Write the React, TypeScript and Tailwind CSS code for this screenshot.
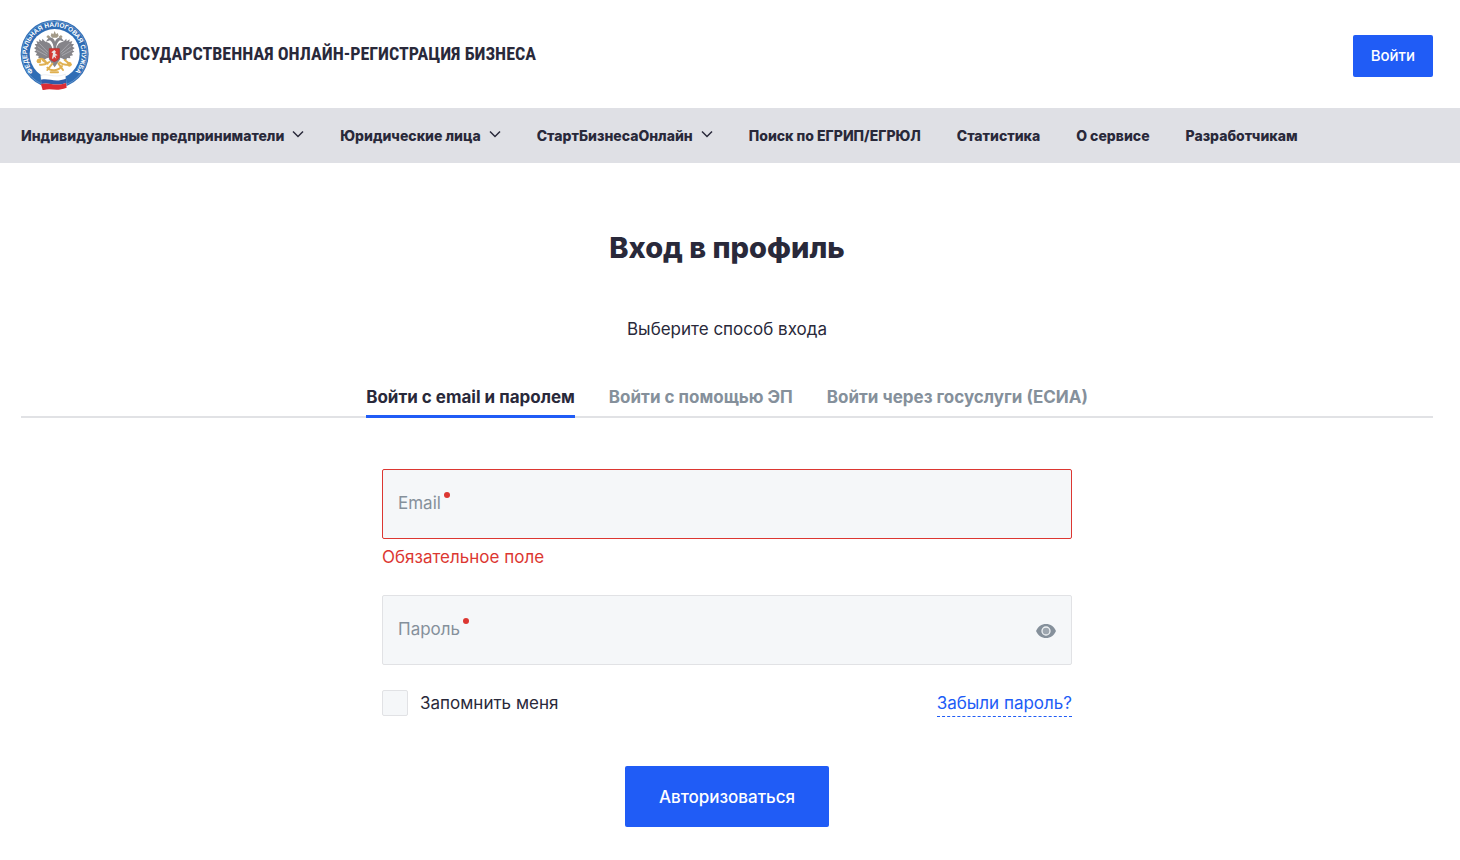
import { useState } from "react";

function Emblem() {
  return (
    <svg viewBox="30 24 207 216" className="h-[72px] w-[69px] shrink-0" role="img" aria-label="Федеральная налоговая служба">
      <defs>
        <path id="ring" d="M79 194 A82 82 0 1 1 187 194" />
      </defs>
      <circle cx="134" cy="132" r="102" fill="#2f6db5" />
      <circle cx="134" cy="132" r="98" fill="none" stroke="#8fb4dc" strokeWidth="1.500" />
      <circle cx="134" cy="132" r="75" fill="#ffffff" />
      <text fontSize="19.500" fontWeight="700" fill="#ffffff" fontFamily="Liberation Sans, sans-serif">
        <textPath href="#ring" startOffset="50%" textAnchor="middle">ФЕДЕРАЛЬНАЯ НАЛОГОВАЯ СЛУЖБА</textPath>
      </text>
      <g fill="#858489">
        <path d="M128 118c-3-15-11-22-22-23l-9-9-1 8-9-6 1 8-9-3 3 9-8 0 5 8-7 4 7 6-6 5 8 4-4 7 9 2-1 7 10-1 3 8 12-7 18-5z" />
        <path d="M138 118c3-15 11-22 22-23l9-9 1 8 9-6-1 8 9-3-3 9 8 0-5 8 7 4-7 6 6 5-8 4 4 7-9 2 1 7-10-1-3 8-12-7-18-5z" />
        <path d="M130 119c2-12-2-22-10-28l-13 4 10-13c12 0 18 8 18 16 0-8 8-16 18-16l10 13-13-4c-8 6-13 16-11 28l12 28-17 25-18-25z" />
      </g>
      <g fill="none" stroke="#b6b6bc" strokeWidth="2">
        <path d="M88 100l26 27M83 110l29 22M80 121l30 16M178 100l-26 27M183 110l-29 22M186 121l-30 16" />
      </g>
      <path d="M122 77l3-8 5 4 4-10 4 10 5-4 3 8-5 6h-14z" fill="#a39a88" />
      <path d="M109 81l5-6 7 5-4 6zM146 80l7-5 5 6-8 5z" fill="#a39a88" />
      <path d="M118 116h30v27q-4 9-15 12-11-3-15-12z" fill="#d43a35" stroke="#b82a28" strokeWidth="2" />
      <path d="M126 145l3-15-5-3 9-7 5 5-3 5 8 6-7 1 3 9-7-6-3 7z" fill="#e9e5e4" />
      <g fill="none" stroke="#e0b050" strokeWidth="6" strokeLinecap="round">
        <path d="M83 154c9-12 18-8 24 1M90 164c13 3 21-4 28-8M112 173c10 12 34 10 44-5M150 157c9 10 19 7 28 6M164 150l18 14M99 151l14 10M127 161l-15 19M145 160l14 20" />
        <path d="M122 187h22" />
      </g>
      <circle cx="87" cy="153" r="7" fill="#e0b050" />
      <circle cx="178" cy="163" r="7" fill="#e0b050" />
      <g transform="translate(0 5)">
        <path d="M92 191c24-7 38 10 74-3l3 35c-34 13-51-3-73 5z" fill="#ffffff" stroke="#c9ced8" strokeWidth="1" />
        <path d="M93 204c25-6 40 10 75-3v13c-34 12-51-4-74 3z" fill="#315ca9" />
        <path d="M93 217c24-7 41 9 75-3l2 14c-34 13-46-1-72 8z" fill="#dc2d35" />
      </g>
    </svg>
  );
}

function Chevron() {
  return (
    <svg viewBox="0 0 12 12" className="mb-1 size-3" fill="none" stroke="#29293a" strokeWidth="1.500" aria-hidden="true">
      <path d="M1 3.500l5 5 5-5" />
    </svg>
  );
}

const navItems = [
  { label: "Индивидуальные предприниматели", menu: true },
  { label: "Юридические лица", menu: true },
  { label: "СтартБизнесаОнлайн", menu: true },
  { label: "Поиск по ЕГРИП/ЕГРЮЛ", menu: false },
  { label: "Статистика", menu: false },
  { label: "О сервисе", menu: false },
  { label: "Разработчикам", menu: false },
];

const tabs = ["Войти с email и паролем", "Войти с помощью ЭП", "Войти через госуслуги (ЕСИА)"];

function FloatingLabel({ htmlFor, text }: { htmlFor: string; text: string }) {
  return (
    <label htmlFor={htmlFor} className="pointer-events-none absolute top-[22px] left-4 flex text-[17px] leading-6 text-[#85909b]">
      {text}
      <span className="mt-px ml-[3px] size-[6px] rounded-full bg-[#dc3732]" />
    </label>
  );
}

export default function App() {
  const [tab, setTab] = useState(0);
  const [visible, setVisible] = useState(false);
  const [email, setEmail] = useState("");
  const [password, setPassword] = useState("");

  return (
    <div className="min-h-screen bg-white font-[Inter,sans-serif] text-[#29293a]">
      <header className="flex h-[108px] items-center justify-between pr-[27px] pl-5">
        <a href="#" className="flex items-center gap-8">
          <Emblem />
          <span className="font-['Roboto_Condensed','Liberation_Sans_Narrow',Roboto,sans-serif] text-[18px] leading-6 font-bold">
            ГОСУДАРСТВЕННАЯ ОНЛАЙН-РЕГИСТРАЦИЯ БИЗНЕСА
          </span>
        </a>
        <button type="button" className="mt-1 h-[42px] rounded-[2px] bg-[#205cf6] px-[18px] text-[15px] font-medium text-white">
          Войти
        </button>
      </header>

      <nav className="flex h-[55px] items-center gap-9 bg-[#dfe0e5] pr-[27px] pl-[21px] text-[14px] font-extrabold whitespace-nowrap">
        {navItems.map((item) =>
          item.menu ? (
            <button key={item.label} type="button" className="flex items-center gap-2">
              {item.label}
              <Chevron />
            </button>
          ) : (
            <a key={item.label} href="#">
              {item.label}
            </a>
          ),
        )}
      </nav>

      <main className="flex flex-col items-center pr-[27px] pb-8 pl-[21px]">
        <h1 className="mt-[65px] text-[29px] leading-10 font-extrabold">Вход в профиль</h1>
        <p className="mt-[49px] text-[17px] leading-6">Выберите способ входа</p>

        <div role="tablist" className="mt-11 flex w-full justify-center gap-[34px] border-b-2 border-[#e1e2e5] text-[17px] leading-6 font-bold">
          {tabs.map((label, i) => (
            <button
              key={label}
              type="button"
              role="tab"
              aria-selected={tab === i}
              onClick={() => setTab(i)}
              className={
                tab === i
                  ? "-mb-[2px] border-b-[3px] border-[#205cf6] pb-[6px]"
                  : "-mb-[2px] border-b-[3px] border-transparent pb-[6px] text-[#85909b]"
              }
            >
              {label}
            </button>
          ))}
        </div>

        <form className="mt-[51px] flex w-full max-w-[690px] flex-col text-[17px] leading-6" onSubmit={(e) => e.preventDefault()}>
          <div className="relative">
            <input
              id="email"
              type="text"
              value={email}
              onChange={(e) => setEmail(e.target.value)}
              aria-invalid="true"
              aria-describedby="email-error"
              className="block h-[70px] w-full rounded-[2px] border border-[#dc3732] bg-[#f5f7f9] px-4 pt-6 outline-none"
            />
            <FloatingLabel htmlFor="email" text="Email" />
          </div>
          <p id="email-error" className="mt-[6px] text-[#dc3732]">Обязательное поле</p>

          <div className="relative mt-[26px]">
            <input
              id="password"
              type={visible ? "text" : "password"}
              value={password}
              onChange={(e) => setPassword(e.target.value)}
              className="block h-[70px] w-full rounded-[2px] border border-[#e1e2e5] bg-[#f5f7f9] pt-6 pr-12 pl-4 outline-none"
            />
            <FloatingLabel htmlFor="password" text="Пароль" />
            <button type="button" aria-label="Показать пароль" onClick={() => setVisible(!visible)} className="absolute top-[26px] right-4">
              <svg viewBox="0 0 20 20" className="size-5" aria-hidden="true">
                <path d="M0 10C2 5.500 5.500 3 10 3s8 2.500 10 7c-2 4.500-5.500 7-10 7S2 14.500 0 10z" fill="#85909b" />
                <circle cx="10" cy="10" r="4" fill="#9da6af" stroke="#eef1f4" strokeWidth="1.300" />
              </svg>
            </button>
          </div>

          <div className="mt-6 flex items-end justify-between">
            <label className="flex h-7 items-center gap-3">
              <input
                type="checkbox"
                className="size-[26px] appearance-none rounded-[2px] border border-[#e1e2e5] bg-[#f5f7f9] checked:bg-[#205cf6]"
              />
              Запомнить меня
            </label>
            <a href="#" className="border-b border-dashed border-[#205cf6] pb-px text-[#205cf6]">
              Забыли пароль?
            </a>
          </div>

          <button type="submit" className="mt-[49px] h-[61px] self-center rounded-[2px] bg-[#205cf6] px-[34px] font-medium text-white">
            Авторизоваться
          </button>
        </form>
      </main>
    </div>
  );
}
